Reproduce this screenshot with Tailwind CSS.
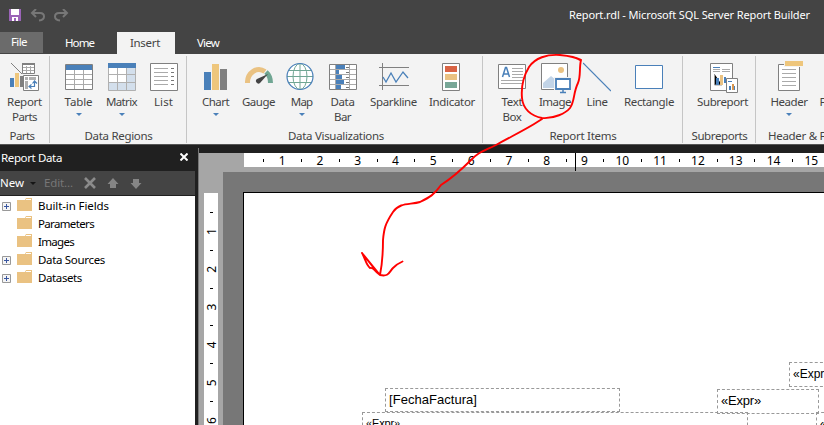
<!DOCTYPE html>
<html lang="en">
<head>
<meta charset="utf-8">
<title>Report Builder</title>
<script src="https://cdn.jsdelivr.net/npm/@tailwindcss/browser@4"></script>
</head>
<body class="w-[824px] h-[425px] overflow-hidden relative bg-[#202020] font-['Noto_Sans','Open_Sans',sans-serif] text-[11.5px] leading-[15px] text-[#444]">
<header class="h-[32px] bg-[#444] flex items-center relative">
  <svg class="ml-[9px] shrink-0" width="60" height="14" viewBox="0 0 60 14"><path fill="#9b64b8" d="M0 0h12v12H0z"/><path fill="#fff" d="M2 0h8v6H2zM3 8h6v4H3z"/><path fill="#9b64b8" d="M5 9h2v3H5z"/><g fill="none" stroke="#777" stroke-width="2"><path d="M27 0l-4 4 4 4M23 4h8q4 0 4 3.500t-5 4M54 0l4 4-4 4M58 4h-8q-4 0-4 3.500t5 4"/></g></svg>
  <span data-w="241" class="ml-auto mr-[14px] mt-[-4px] text-white text-[11px] whitespace-nowrap">Report.rdl - Microsoft SQL Server Report Builder</span>
</header>
<nav class="h-[22px] bg-[#444] flex text-white leading-[21px]">
  <div class="w-[43px] h-[21px] bg-[#6b6b6b] pl-[11px] leading-[20px]"><span data-w="16">File</span></div>
  <div class="w-[74px] pl-[22px]"><span data-w="27">Home</span></div>
  <div class="w-[58px] pl-[13px] bg-[#f3f3f3] text-[#444]"><span data-w="30">Insert</span></div>
  <div class="pl-[22px]"><span data-w="22">View</span></div>
</nav>
<section class="h-[91px] bg-[#f3f3f3] border-b border-[#555] flex overflow-hidden text-center whitespace-nowrap">
  <div class="w-[50px] shrink-0 flex flex-col relative after:absolute after:right-0 after:top-[2px] after:h-[87px] after:w-px after:bg-[#c5c5c5]">
    <div class="h-[74px] flex"><div class="w-[49px] pt-[8px]">
      <svg class="mx-auto" width="30" height="32" viewBox="0 0 30 32"><path d="M1 1l11 11" stroke="#808080"/><path fill="#4a80b9" d="M0 16h4v9H0z"/><path fill="#eec67c" d="M5 11h4v14H5z"/><path fill="#808080" d="M10 14h3v11h-3z"/><path d="M12.500 1.500h12v10h-12z" fill="#fff" stroke="#808080"/><path d="M12 2h13" stroke="#808080" stroke-width="2"/><path d="M13 5.500h11M13 8.500h11M16.500 4v7M20.500 4v7" stroke="#aaa"/><path d="M13.500 13.500h15v15h-15z" fill="#fff" stroke="#808080"/><path fill="#b0b0b0" d="M15 15h3v3h-3zM19 15h7v3h-7zM15 19h3v8h-3z"/><path d="M19.500 24.500h5v-5m-2 2l2-2.500 2.500 2.500m-5.500 1l-2.500 2 2.500 2" fill="none" stroke="#4a80b9" stroke-width="1.200"/></svg>
      <div><span data-w="35">Report</span></div><div><span data-w="25">Parts</span></div></div></div>
    <div class="pr-[6px]"><span data-w="25">Parts</span></div>
  </div>
  <div class="w-[137px] shrink-0 flex flex-col relative after:absolute after:right-0 after:top-[2px] after:h-[87px] after:w-px after:bg-[#c5c5c5]">
    <div class="h-[74px] flex pl-[7px]">
      <div class="w-[43px] pt-[8px]"><svg class="mx-auto" width="28" height="32" viewBox="0 0 28 32"><path fill="#fff" stroke="#808080" d="M.5 2.500h27v25H.5z"/><path fill="#4a80b9" d="M1 3h26v5H1z"/><path stroke="#aaa" d="M1 12.500h26M1 17.500h26M1 22.500h26M9.500 8v19M18.500 8v19"/></svg><div><span data-w="28">Table</span></div><i class="block mx-auto mt-[4px] w-0 h-0 border-x-[3px] border-x-transparent border-t-[3px] border-t-[#4a80b9]"></i></div>
      <div class="w-[43px] pt-[8px]"><svg class="mx-auto" width="28" height="32" viewBox="0 0 28 32"><path fill="#fff" d="M0 1h28v28H0z"/><path fill="#d3dfec" d="M19 6h9v23H0v-9h19z"/><path fill="none" stroke="#b0b0b0" d="M.5 6v22.500h27V6M0 12.500h28M0 20.500h28M9.500 6v23M18.500 6v23"/><path fill="#4a80b9" d="M0 1h28v5H0z"/></svg><div><span data-w="31">Matrix</span></div><i class="block mx-auto mt-[4px] w-0 h-0 border-x-[3px] border-x-transparent border-t-[3px] border-t-[#4a80b9]"></i></div>
      <div class="w-[41px] pt-[8px]"><svg class="mx-auto" width="28" height="32" viewBox="0 0 28 32"><path fill="#fff" stroke="#808080" d="M.5 1.500h27v27H.5z"/><path stroke="#aaa" d="M4 6.500h14M4 10.500h14M4 14.500h14M4 18.500h14M4 22.500h14"/><path stroke="#777" d="M21 6.500h3M21 10.500h3M21 14.500h3M21 18.500h3M21 22.500h3"/></svg><div><span data-w="19">List</span></div></div>
    </div>
    <div><span data-w="68">Data Regions</span></div>
  </div>
  <div class="w-[296px] shrink-0 flex flex-col relative after:absolute after:right-0 after:top-[2px] after:h-[87px] after:w-px after:bg-[#c5c5c5]">
    <div class="h-[74px] flex pl-[7px]">
      <div class="w-[43px] pt-[8px]"><svg class="mx-auto" width="23" height="32" viewBox="0 0 23 32"><path fill="#4a80b9" d="M0 10h7v18H0z"/><path fill="#eec67c" d="M8 2h7v26H8z"/><path fill="#808080" d="M16 7h7v21h-7z"/></svg><div><span data-w="27">Chart</span></div><i class="block mx-auto mt-[4px] w-0 h-0 border-x-[3px] border-x-transparent border-t-[3px] border-t-[#4a80b9]"></i></div>
      <div class="w-[43px] pt-[8px]"><svg class="mx-auto" width="28" height="32" viewBox="0 0 28 32"><path d="M2.500 21A11.500 13 0 0 1 20 9.500" fill="none" stroke="#eac282" stroke-width="5"/><path d="M21 10Q25.500 14 25.500 21" fill="none" stroke="#70a693" stroke-width="5"/><path fill="#444" d="M23 12l-8 9a2.500 2.500 0 1 1-3-4z"/></svg><div><span data-w="33">Gauge</span></div></div>
      <div class="w-[43px] pt-[8px]"><svg class="ml-[6px]" width="28" height="32" viewBox="0 0 28 32"><circle cx="14" cy="14.500" r="12.500" fill="#fff"/><path d="M14 1v27M2.500 8.500h23M1 14.500h26M2.500 20.500h23" stroke="#70a693"/><ellipse cx="14" cy="14.500" rx="7" ry="13" fill="none" stroke="#70a693"/><circle cx="14" cy="14.500" r="13" fill="none" stroke="#4a80b9" stroke-width="1.200"/></svg><div><span data-w="21">Map</span></div><i class="block mx-auto mt-[4px] w-0 h-0 border-x-[3px] border-x-transparent border-t-[3px] border-t-[#4a80b9]"></i></div>
      <div class="w-[39px] pt-[8px]"><svg class="mx-auto" width="28" height="32" viewBox="0 0 28 32"><path fill="#fff" stroke="#808080" d="M.5 2.500h27v25H.5z"/><path stroke="#aaa" d="M1 7.500h26M1 12.500h26M1 17.500h26M1 22.500h26M6.500 3v24M20.500 3v24"/><path fill="#4a80b9" d="M7 3h9v4H7zM7 8h3v4H7zM7 13h6v4H7zM7 18h8v4H7zM7 23h5v4H7z"/><path stroke="#777" d="M17 5.500h3M17 10.500h3M17 15.500h3M17 20.500h3M17 25.500h3"/></svg><div><span data-w="24">Data</span></div><div><span data-w="17">Bar</span></div></div>
      <div class="w-[63px] pt-[8px]"><svg class="mx-auto" width="30" height="32" viewBox="0 0 30 32"><path stroke="#808080" d="M3.500 1v27M0 5.500h30M0 23.500h30"/><path d="M4 15l3 5 5-9 5 9 7-10 5 6" fill="none" stroke="#4a80b9" stroke-width="1.300"/></svg><div><span data-w="47">Sparkline</span></div></div>
      <div class="w-[54px] pt-[8px]"><svg class="ml-[17px]" width="18" height="32" viewBox="0 0 18 32"><path fill="#fff" stroke="#808080" d="M.5 1.500h17v27H.5z"/><path fill="#d96445" d="M3 4h12v6H3z"/><path fill="#eac282" d="M3 12h12v6H3z"/><path fill="#78a797" d="M3 20h12v6H3z"/></svg><div><span data-w="46">Indicator</span></div></div>
    </div>
    <div class="pl-[2px]"><span data-w="96">Data Visualizations</span></div>
  </div>
  <div class="w-[200px] shrink-0 flex flex-col relative after:absolute after:right-0 after:top-[2px] after:h-[87px] after:w-px after:bg-[#c5c5c5]">
    <div class="h-[74px] flex pl-[7px]">
      <div class="w-[44px] pt-[8px]"><svg class="mx-auto" width="28" height="32" viewBox="0 0 28 32"><path fill="#fff" stroke="#808080" d="M.5 2.500h27v24H.5z"/><path d="M4.500 15L7.500 5.500h1L11.500 15M5.500 12h5" fill="none" stroke="#4a80b9" stroke-width="1.500"/><path stroke="#aaa" d="M14 6.500h11M14 9.500h11M14 12.500h11M14 15.500h11M3 18.500h22M3 21.500h22"/></svg><div><span data-w="21">Text</span></div><div><span data-w="19">Box</span></div></div>
      <div class="w-[42px] pt-[8px]"><svg class="ml-[7px]" width="31" height="32" viewBox="0 0 31 32"><path fill="#fff" stroke="#808080" d="M.5 1.500h26v26H.5z"/><circle cx="20" cy="8" r="3" fill="#eac282"/><path fill="#c2d4e7" d="M2 26v-5l8-7 5 4v8z"/><path fill="#fff" stroke="#f3f3f3" stroke-width="4" d="M15 17h14v10H15z"/><path fill="#fff" stroke="#4a80b9" stroke-width="1.800" d="M15 17h14v10H15z"/><path stroke="#4a80b9" stroke-width="1.500" d="M22 27v3M19 30.500h6"/></svg><div><span data-w="32">Image</span></div></div>
      <div class="w-[42px] pt-[8px]"><svg class="mx-auto" width="28" height="32" viewBox="0 0 28 32"><path stroke="#4a80b9" stroke-width="1.200" d="M0 1l28 28"/></svg><div><span data-w="21">Line</span></div></div>
      <div class="w-[62px] pt-[8px]"><svg class="ml-[17px]" width="28" height="32" viewBox="0 0 28 32"><path fill="#fff" stroke="#4a80b9" d="M.5 3.500h27v23H.5z"/></svg><div><span data-w="50">Rectangle</span></div></div>
    </div>
    <div><span data-w="67">Report Items</span></div>
  </div>
  <div class="w-[73px] shrink-0 flex flex-col relative after:absolute after:right-0 after:top-[2px] after:h-[87px] after:w-px after:bg-[#c5c5c5]">
    <div class="h-[74px] flex pl-[7px]">
      <div class="w-[65px] pt-[8px]"><svg class="ml-[20px]" width="28" height="32" viewBox="0 0 28 32"><path fill="#fff" stroke="#808080" d="M.5 1.500h22v27H.5z"/><path stroke="#4a80b9" d="M3 5.500h7"/><path stroke="#aaa" d="M3 7.500h7M3 9.500h7M12 7.500h8M12 9.500h8"/><path stroke="#999" d="M4.500 12v11H12"/><path fill="#4a80b9" d="M6 16h3v7H6zM14 15h2v6h-2z"/><path fill="#eac282" d="M10 13h3v10h-3z"/><path fill="#fff" stroke="#808080" d="M16.500 16.500h11v14h-11z"/><path stroke="#4a80b9" d="M18 19.500h4"/><path fill="#4a80b9" d="M19 24h2v4h-2zM24 24h1v4h-1z"/><path fill="#d9964f" d="M22 22h2v6h-2z"/></svg><div><span data-w="51">Subreport</span></div></div>
    </div>
    <div><span data-w="56">Subreports</span></div>
  </div>
  <div class="w-[120px] shrink-0 flex flex-col text-left">
    <div class="h-[74px] flex pl-[7px] text-center">
      <div class="w-[52px] pt-[8px]"><svg class="ml-[15px] overflow-visible" width="26" height="32" viewBox="0 0 26 32"><path fill="#fff" stroke="#808080" d="M.5 2.500h21v26H.5z"/><path fill="#f3f3f3" d="M6 -1h20v6H6z"/><path fill="#eec67c" d="M7 -1h18v5H7z"/><path stroke="#aaa" d="M4 7.500h14M4 11.500h14M4 15.500h14M4 19.500h14M4 23.500h14"/></svg><div><span data-w="37">Header</span></div><i class="block mx-auto mt-[4px] w-0 h-0 border-x-[3px] border-x-transparent border-t-[3px] border-t-[#4a80b9]"></i></div>
      <div class="w-[45px] pt-[40px]"><span data-w="36">Footer</span></div>
    </div>
    <div class="pl-[12px]"><span data-w="85">Header &amp; Footer</span></div>
  </div>
</section>
<main class="h-[280px] flex">
  <aside class="w-[195px] shrink-0 flex flex-col text-black">
    <div class="h-[26px] flex items-center text-white pb-[1px]"><span class="pl-[1px]"><span data-w="61">Report Data</span></span><svg class="ml-auto mr-[7px] mt-[-2px]" width="8" height="8" viewBox="0 0 8 8"><path d="M.5.5l7 7M7.500.5l-7 7" stroke="#fff" stroke-width="2"/></svg></div>
    <div class="h-[25px] bg-[#444] border-b border-[#202020] flex items-center text-white"><span class="w-[30px] mb-[1px]"><span data-w="24">New</span></span><i class="w-0 h-0 border-x-[3px] border-x-transparent border-t-[3px] border-t-[#151515]"></i><span class="ml-[8px] w-[40px] mb-[1px] text-[#777]"><span data-w="29">Edit...</span></span>
      <svg width="60" height="12" viewBox="0 0 60 12"><path d="M1 1l10 10M11 1L1 11" stroke="#8b8b8b" stroke-width="2.600"/><path fill="#858585" d="M29 1l5.500 6H32v4h-6V7h-2.500zM52 12l-5.500-6H49V2h6v4h2.500z"/></svg></div>
    <div id="tree" class="grow bg-white"></div>
  </aside>
  <div class="w-[4px] shrink-0 bg-[#202020] border-r border-[#777] mt-[3px]"></div>
  <div class="grow flex flex-col pt-[8px]">
    <div class="h-[19px] shrink-0 bg-[#a6a6a6] pl-[45px]"><svg id="hr" class="bg-white block text-[12px] overflow-visible" width="580" height="14"></svg></div>
    <div class="grow flex">
      <div class="w-[24px] shrink-0 bg-[#a6a6a6] pt-[21px] pl-[5px]"><svg id="vr" class="bg-white block text-[12px]" width="14" height="232"></svg></div>
      <div class="grow bg-[#777] pl-[20px] pt-[20px]">
        <div class="h-[233px] w-[581px] border-l border-t border-black bg-white relative overflow-hidden font-['Liberation_Sans',sans-serif] text-black">
          <div class="absolute left-[141px] top-[195px] w-[235px] h-[24px] border border-dashed border-[#999] text-[13px] leading-[22px] pl-[3px]"><span data-w="88">[FechaFactura]</span></div>
          <div class="absolute left-[118px] top-[219px] w-[386px] h-[24px] border border-dashed border-[#999] text-[11px] leading-[21px] pl-[3px]"><span data-w="34">«Expr»</span></div>
          <div class="absolute left-[473px] top-[196px] w-[102px] h-[25px] border border-dashed border-[#999] text-[13px] leading-[22px] pl-[3px]"><span data-w="40">«Expr»</span></div>
          <div class="absolute left-[545px] top-[169px] w-[70px] h-[25px] border border-dashed border-[#999] text-[12px] leading-[22px] pl-[3px]"><span data-w="38">«Expr»</span></div>
          <div class="absolute left-[572px] top-[219px] w-[70px] h-[25px] border border-dashed border-[#999] text-[12px] leading-[22px] pl-[3px]"><span data-w="38">«Expr»</span></div>
        </div>
      </div>
    </div>
  </div>
</main>
<svg class="absolute left-0 top-0" width="824" height="425" viewBox="0 0 824 425" fill="none" stroke="#f00" stroke-width="1.900" stroke-linecap="round" stroke-linejoin="round"><path d="M580 60C576 57 570 56 560 55C547 54 535 58 529 67C523 77 521 87 522 98C523 109 531 116 542 118C554 119 566 113 570 108C575 101 573 93 578 83C581 76 579 68 581 60L576 58M542 119C529 128 510 137 496 145C484 151 478 152 470 161C459 172 452 178 441 185C434 195 430 197 420 202C410 205 400 202 393 212C385 224 384 229 383 240C383 255 382 265 380 275L362 253C365 258 366 265 370 268C374 267 373 270 380 275C389 277 389 272 393 268C396 265 399 263 402.500 261.500M362 253L373 267"/></svg>
<script>
const tree = [["Built-in Fields",71,1],["Parameters",56,0],["Images",36,0],["Data Sources",67,1],["Datasets",44,1]];
document.getElementById("tree").innerHTML = tree.map(([t,w,p]) => `<div class="h-[18px] flex items-center"><svg width="38" height="18" viewBox="0 0 38 18">${p?'<path d="M2.500 6.500h8v8h-8z" fill="#f4f4f4" stroke="#999"/><path d="M4 10.500h5M6.500 8v5" stroke="#3956a0"/>':''}<path fill="#eac282" d="M17 4h8l1-2h6v13H17z"/><path fill="#fff" d="M26 3h5v1h-5z"/></svg><span data-w="${w}">${t}</span></div>`).join("");
let h = "", v = "";
for (let n = 1; n <= 15; n++) {
  const c = 0.3 + 37.8 * n, d = 0.7 + 37.8 * n;
  h += `<text x="${c}" y="11.500" text-anchor="middle">${n}</text>`;
  h += `<path d="M${Math.round(c - 19)}.5 6v3" stroke="#000"/>`;
  if (n < 7) {
    v += `<text transform="translate(11.500 ${d}) rotate(-90)" text-anchor="middle">${n}</text>`;
    v += `<path d="M6 ${Math.round(d - 19.500)}.5h3" stroke="#000"/>`;
  }
}
h += '<path d="M331.500 0v18" stroke="#000"/>';
document.getElementById("hr").innerHTML = h;
document.getElementById("vr").innerHTML = v;
// Tighten or loosen each label to its nominal width
function fit() {
  document.querySelectorAll("[data-w]").forEach(e => {
    const n = e.textContent.length, want = +e.dataset.w;
    const r = document.createRange(); r.selectNodeContents(e);
    e.style.letterSpacing = "0px"; e.style.marginRight = "";
    const base = r.getBoundingClientRect().width;
    e.style.letterSpacing = "1px";
    const gain = (r.getBoundingClientRect().width - base) || n;
    let s = (want - base) / gain;
    s = Math.max(-0.9, Math.min(0.9, s));
    e.style.letterSpacing = s + "px";
  });
}
fit();
document.fonts.ready.then(fit);
addEventListener("load", () => { fit(); requestAnimationFrame(fit); });
</script>
</body>
</html>
